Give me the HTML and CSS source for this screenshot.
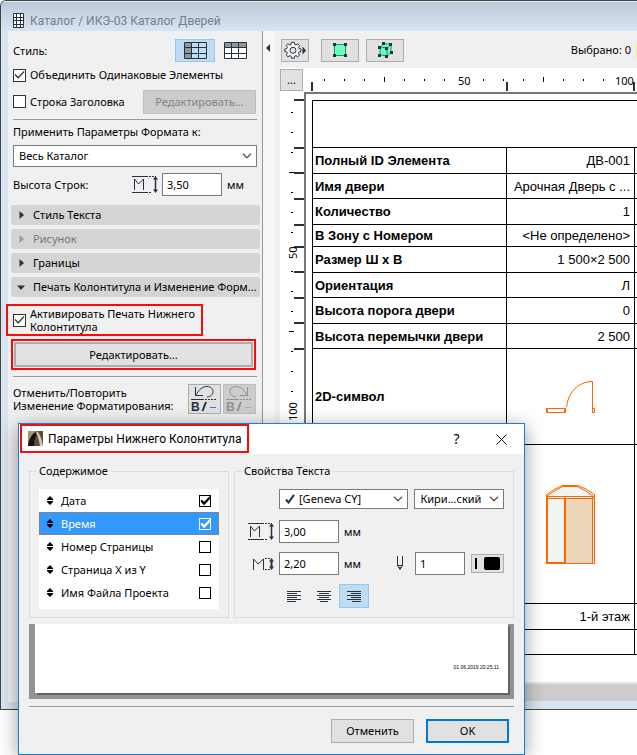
FILE: index.html
```html
<!DOCTYPE html>
<html lang="ru">
<head>
<meta charset="utf-8">
<title>Каталог / ИКЭ-03 Каталог Дверей</title>
<link rel="stylesheet" href="styles.css">
</head>
<body>
<svg class="defs" aria-hidden="true">
  <defs>
    <symbol id="chevron" viewBox="0 0 10 6"><path d="M1 .8 5 4.8 9 .8" fill="none" stroke="#555" stroke-width="1.3"/></symbol>
    <symbol id="arrow-right" viewBox="0 0 5 8"><path d="M.5 0 5 4 .5 8z" fill="currentColor"/></symbol>
    <symbol id="arrow-down" viewBox="0 0 8 5"><path d="M0 .5H8L4 5z" fill="currentColor"/></symbol>
    <symbol id="row-height" viewBox="0 0 27 19">
      <path d="M0 1.5H14M0 17.5H14" stroke="#26333c" fill="none"/>
      <path d="M14 1.5H24M14 17.5H20" stroke="#26333c" stroke-dasharray="2 1" fill="none"/>
      <path d="M2.500 15V4L6.500 9 11.500 4V15" stroke="#26333c" fill="none"/>
      <path d="M23.500 3V16" stroke="#26333c" stroke-width="1.500"/>
      <path d="M21 4.500 23.500 1 26 4.500zM21 14.500 23.500 18 26 14.500z" fill="#26333c"/>
    </symbol>
    <symbol id="text-height" viewBox="0 0 22 14">
      <path d="M.5 13V2L5 7 10.500 2V13" stroke="#26333c" fill="none"/>
      <path d="M12 1.500H18M12 12.500H18" stroke="#26333c" stroke-dasharray="2 1" fill="none"/>
      <path d="M18.500 3V11" stroke="#26333c" stroke-width="2"/>
      <path d="M16 4.500 18.500 1 21 4.500zM16 9.500 18.500 13 21 9.500z" fill="#26333c"/>
    </symbol>
    <symbol id="sorter" viewBox="0 0 6 9"><path d="M3 0 6 3V4H0V3zM0 5H6V6L3 9 0 6z" fill="#000"/></symbol>
  </defs>
</svg>

<div class="window">
  <header class="titlebar">
    <svg width="11" height="15" viewBox="0 0 11 15"><path d="M.5.5H10.500V14.500H.5zM3.500 0V15M7.500 0V15M0 4.500H11M0 7.500H11M0 11.500H11" fill="#fff" stroke="#26333c"/></svg>
    <h1>Каталог / ИКЭ-03 Каталог Дверей</h1>
  </header>

  <div class="workspace">
    <aside class="panel">
      <div class="row style-row">
        <span class="grow">Стиль:</span>
        <button class="style-button active" aria-label="Заголовки слева">
          <svg width="23" height="17" viewBox="0 0 23 17"><path d="M1 1H7V16H1z" fill="#8f9698"/><path d="M8 1H22V16H8z" fill="#bfe0f2"/><path d="M.5.5H22.500V16.500H.5zM7.500 0V17M14.500 0V17M0 5.500H23M0 11.500H23" fill="none" stroke="#26333c"/></svg>
        </button>
        <button class="style-button" aria-label="Заголовки сверху">
          <svg width="23" height="17" viewBox="0 0 23 17"><path d="M1 1H22V5H1z" fill="#8f9698"/><path d="M1 6H22V16H1z" fill="#fff"/><path d="M.5.5H22.500V16.500H.5zM7.500 0V17M14.500 0V17M0 5.500H23M0 11.500H23" fill="none" stroke="#26333c"/></svg>
        </button>
      </div>
      <label class="row check-row"><input type="checkbox" class="check" checked>Объединить Одинаковые Элементы</label>
      <div class="row header-row">
        <label class="check-label grow"><input type="checkbox" class="check">Строка Заголовка</label>
        <button class="button edit-header" disabled>Редактировать...</button>
      </div>
      <hr>
      <label class="apply-label" for="scope">Применить Параметры Формата к:</label>
      <div class="select scope">
        <select id="scope"><option>Весь Каталог</option></select>
        <svg width="10" height="6"><use href="#chevron"/></svg>
      </div>
      <div class="row height-row">
        <label class="grow" for="row-h">Высота Строк:</label>
        <svg width="27" height="19"><use href="#row-height"/></svg>
        <input id="row-h" class="field" value="3,50">
        <span class="unit">мм</span>
      </div>

      <div class="sections">
        <button class="section"><svg width="5" height="8"><use href="#arrow-right"/></svg><span>Стиль Текста</span></button>
        <button class="section" disabled><svg width="5" height="8"><use href="#arrow-right"/></svg><span>Рисунок</span></button>
        <button class="section"><svg width="5" height="8"><use href="#arrow-right"/></svg><span>Границы</span></button>
        <button class="section open"><svg width="8" height="5"><use href="#arrow-down"/></svg><span>Печать Колонтитула и Изменение Форм...</span></button>
      </div>

      <label class="footer-check marked"><input type="checkbox" class="check" checked><span>Активировать Печать Нижнего Колонтитула</span></label>
      <div class="footer-edit marked"><button class="button">Редактировать...</button></div>
      <hr>
      <div class="row undo-row">
        <span class="grow">Отменить/Повторить<br>Изменение Форматирования:</span>
        <button class="button square-button" aria-label="Отменить">
          <svg width="27" height="28" viewBox="0 0 27 28" fill="none" stroke="#26333c"><path d="M4.500 2V10.500H12M4.500 10.500C8 5 11 1.500 16 1.500 20 1.500 22 4 22 6.500 22 10 19.500 11.500 16 12"/><path d="M0 14.500H13"/><path d="M14 14.500H26" stroke-dasharray="2 1"/><text x="0" y="26" fill="#26333c" stroke="none">B</text><path d="M11.500 26 15 17" stroke-width="2"/><path d="M19 22.500H25" stroke="#2a7de1"/></svg>
        </button>
        <button class="button square-button" aria-label="Повторить" disabled>
          <svg width="27" height="28" viewBox="0 0 27 28" fill="none" stroke="#8d9295"><path d="M21.500 2V10.500H14M21.500 10.500C18 5 15 1.500 10 1.500 6 1.500 4 4 4 6.500 4 10 6.500 11.500 10 12"/><path d="M0 14.500H13"/><path d="M14 14.500H26" stroke-dasharray="2 1"/><text x="0" y="26" fill="#8d9295" stroke="none">B</text><path d="M11.500 26 15 17" stroke-width="2"/><path d="M19 22.500H25" stroke="#8db4e0"/></svg>
        </button>
      </div>
    </aside>

    <button class="splitter" aria-label="Свернуть панель"><svg width="4" height="8" viewBox="0 0 4 8"><path d="M4 0V8L0 4z" fill="#333"/></svg></button>

    <main class="view">
      <div class="toolbar">
        <button class="button gear" aria-label="Настройки">
          <svg width="22" height="18" viewBox="0 0 22 18"><path d="M7.300 1.300H10.300L10.700 3.400 12 4 13.700 2.800 15.600 4.700 14.500 6.400 15 7.600 17 8V10.500L15 11 14.400 12.300 15.600 14 13.700 15.800 12 14.600 10.700 15.200 10.300 17.200H7.500L7 15.200 5.800 14.600 4 15.800 2.200 14 3.400 12.300 2.800 11 .8 10.600V8L2.800 7.600 3.400 6.300 2.200 4.600 4 2.800 5.800 4 7 3.400z" fill="#f4f4f4" stroke="#26333c" stroke-linejoin="round"/><circle cx="9" cy="9.300" r="3" fill="#e1e1e1" stroke="#26333c"/><path d="M18.500 5.500 22 9.500 18.500 13.500z" fill="#26333c"/></svg>
        </button>
        <button class="button tool" aria-label="Выбрать на плане">
          <svg width="14" height="14" viewBox="0 0 14 14"><path d="M1.500 1.500H12.500V12.500H1.500z" fill="#66ffbf" stroke="#159a56"/><path d="M0 0H3V3H0zM11 0H14V3H11zM0 11H3V14H0zM11 11H14V14H11z" fill="#26333c"/></svg>
        </button>
        <button class="button tool" aria-label="Выбрать в 3D">
          <svg width="15" height="16" viewBox="0 0 15 16"><path d="M2 5 6 1.500 13 2.500V11L9 14 2 13z" fill="#66ffbf" stroke="#159a56"/><path d="M2 5 9 6 13 2.500M9 6V14" fill="none" stroke="#159a56"/><path d="M0 4H3V7H0zM0 12H3V15H0zM7 5H10V8H7zM7 13H10V16H7zM4 0H7V3H4zM11 1H14V4H11zM12 9H15V12H12z" fill="#26333c"/></svg>
        </button>
        <span class="selected-count">Выбрано: 0</span>
        <span class="status-chip"></span>
      </div>

      <div class="sheet-grid">
        <button class="button corner" aria-label="Параметры таблицы">...</button>
        <svg class="ruler-top" width="100%" height="24">
          <path d="M20.500 11V13M40.500 11V13M60.500 11V13M80.500 9V14M100.500 11V13M120.500 11V13M140.500 11V13M179.500 11V13M199.500 11V13M219.500 11V13M239.500 9V14M259.500 11V13M279.500 11V13M299.500 11V13" stroke="#000"/>
          <path d="M8 14V23M203 14V23M330 14V23" stroke="#26333c" stroke-width="2"/>
          <text x="154" y="17">50</text><text x="311" y="17">100</text>
        </svg>
        <svg class="ruler-left" width="24" height="100%">
          <path d="M11 20.500H13M11 40.500H13M11 60.500H13M9 80.500H14M11 100.500H13M11 120.500H13M11 140.500H13M11 179.500H13M11 199.500H13M11 219.500H13M9 239.500H14M11 259.500H13M11 279.500H13M11 299.500H13" stroke="#000"/>
          <path d="M14 8H24M14 56H24M14 81H24M14 107H24M14 133H24M14 155H24M14 180H24M14 206H24M14 231H24M14 257H24M14 353H24" stroke="#26333c" stroke-width="2"/>
          <text transform="translate(17 167) rotate(-90)">50</text><text transform="translate(17 329) rotate(-90)">100</text>
        </svg>
        <div class="sheet">
          <table>
            <colgroup><col class="name-col"><col class="value-col"><col></colgroup>
            <tr class="head"><td colspan="3"></td></tr>
            <tr><th scope="row">Полный ID Элемента</th><td>ДВ-001</td><td></td></tr>
            <tr><th scope="row">Имя двери</th><td>Арочная Дверь с ...</td><td></td></tr>
            <tr><th scope="row">Количество</th><td>1</td><td></td></tr>
            <tr class="tight"><th scope="row">В Зону с Номером</th><td>&lt;Не определено&gt;</td><td></td></tr>
            <tr><th scope="row">Размер Ш х В</th><td>1 500×2 500</td><td></td></tr>
            <tr><th scope="row">Ориентация</th><td>Л</td><td></td></tr>
            <tr><th scope="row">Высота порога двери</th><td>0</td><td></td></tr>
            <tr><th scope="row">Высота перемычки двери</th><td>2 500</td><td></td></tr>
            <tr class="symbol"><th scope="row">2D-символ</th><td class="drawing">
              <svg width="50" height="34" viewBox="0 0 50 34" fill="none" stroke="#f60"><path d="M.5 28.500H19.500V32.500H.5zM1.500 28V33M18.500 28V33M46.500 28.500H48.500V32.500H46.500z"/><path d="M46.500 33V1.500H43"/><path d="M20.500 27C22 13 31 2.500 45 1.500"/></svg>
            </td><td></td></tr>
            <tr class="front"><th scope="row"></th><td class="drawing">
              <svg width="50" height="81" viewBox="0 0 50 81"><path d="M1 12 10 5.500 17 2H33L42 6 49 12V80H1z" fill="#eff5f0"/><path d="M20 14H47V80H20z" fill="#edd6b8"/><g fill="none" stroke="#f60"><path d="M.5 80V10.500M1.500 80V12M1 12.500H48M1 14.500H48M18.500 14V80M19.500 14V80M46.500 12V80M48.500 10V80M0 79.500H49M0 78.500H20"/><path d="M.5 10.500 9 5 16 1.500H32L40 5 48.500 10.500M1 12 10 6 17 2.500H31L39 6.500 47 12"/></g></svg>
            </td><td></td></tr>
            <tr><th scope="row"></th><td>1-й этаж</td><td></td></tr>
            <tr><th scope="row"></th><td></td><td></td></tr>
          </table>
        </div>
      </div>
      <div class="scrollbar"></div>
    </main>
  </div>
</div>

<section class="dialog" role="dialog" aria-labelledby="dialog-title">
  <header class="dialog-bar">
    <div class="dialog-name marked">
      <svg width="15" height="15" viewBox="0 0 15 15"><rect width="15" height="15" fill="#5a5038"/><path d="M0 0H8L4 4 1 9 0 12z" fill="#a1967a"/><path d="M0 15C1 8 4 3 8 1L10 3C7 5 6 10 6 15z" fill="#17140c"/><path d="M9 0C12 3 14 9 15 15H12C11 9 10 5 8 2z" fill="#d2c8a8"/></svg>
      <h2 id="dialog-title">Параметры Нижнего Колонтитула</h2>
    </div>
    <button class="caption-button" aria-label="Справка">?</button>
    <button class="caption-button" aria-label="Закрыть"><svg width="11" height="11" viewBox="0 0 11 11"><path d="M.5.5 10.500 10.500M10.500.5.5 10.500" stroke="#111" fill="none"/></svg></button>
  </header>
  <div class="dialog-body">
    <div class="groups">
      <fieldset class="content-group">
        <legend>Содержимое</legend>
        <div class="list">
          <label class="item"><svg width="6" height="9"><use href="#sorter"/></svg><span>Дата</span><input type="checkbox" class="check bold" checked></label>
          <label class="item current"><svg width="6" height="9"><use href="#sorter"/></svg><span>Время</span><input type="checkbox" class="check bold" checked></label>
          <label class="item"><svg width="6" height="9"><use href="#sorter"/></svg><span>Номер Страницы</span><input type="checkbox" class="check bold"></label>
          <label class="item"><svg width="6" height="9"><use href="#sorter"/></svg><span>Страница X из Y</span><input type="checkbox" class="check bold"></label>
          <label class="item"><svg width="6" height="9"><use href="#sorter"/></svg><span>Имя Файла Проекта</span><input type="checkbox" class="check bold"></label>
        </div>
      </fieldset>
      <fieldset class="text-group">
        <legend>Свойства Текста</legend>
        <div class="text-row fonts">
          <div class="select font-select">
            <svg width="10" height="10" viewBox="0 0 10 10"><path d="M1 5.500 3.500 8.500 9 .8" fill="none" stroke="#26333c" stroke-width="2"/></svg>
            <select aria-label="Шрифт"><option>[Geneva CY]</option></select>
            <svg width="10" height="6"><use href="#chevron"/></svg>
          </div>
          <div class="select script-select">
            <select aria-label="Кодировка"><option>Кири...ский</option></select>
            <svg width="10" height="6"><use href="#chevron"/></svg>
          </div>
        </div>
        <div class="text-row">
          <span class="lead"><svg width="27" height="19"><use href="#row-height"/></svg></span>
          <input class="field" value="3,00" aria-label="Высота строки">
          <span class="unit">мм</span>
        </div>
        <div class="text-row">
          <span class="lead"><svg width="22" height="14"><use href="#text-height"/></svg></span>
          <input class="field" value="2,20" aria-label="Высота текста">
          <span class="unit grow">мм</span>
          <svg class="pen" width="8" height="15" viewBox="0 0 8 15"><path d="M1.500 0V9.500L4 13.500 6.500 9.500V0M1.500 9.500H6.500" fill="none" stroke="#26333c"/><path d="M3 11H5L4 14z" fill="#26333c"/></svg>
          <input class="field pen-field" value="1" aria-label="Перо">
          <button class="button swatch" aria-label="Цвет пера"><svg width="27" height="13" viewBox="0 0 27 13"><path d="M1 1H3V12H1z"/><rect x="10" width="16" height="13" rx="2"/></svg></button>
        </div>
        <div class="text-row aligns">
          <button class="align" aria-label="По левому краю"><svg width="14" height="11" viewBox="0 0 14 11"><path d="M0 .5H14M0 2.500H10M0 4.500H14M0 6.500H10M0 8.500H14M0 10.500H9" stroke="#26333c"/></svg></button>
          <button class="align" aria-label="По центру"><svg width="14" height="11" viewBox="0 0 14 11"><path d="M0 .5H14M2 2.500H12M0 4.500H14M2 6.500H12M0 8.500H14M3 10.500H11" stroke="#26333c"/></svg></button>
          <button class="align active" aria-label="По правому краю"><svg width="14" height="11" viewBox="0 0 14 11"><path d="M0 .5H14M4 2.500H14M0 4.500H14M4 6.500H14M0 8.500H14M5 10.500H14" stroke="#26333c"/></svg></button>
        </div>
      </fieldset>
    </div>
    <div class="preview"><div class="paper">01.06.2019 20:25:11</div></div>
    <hr>
    <div class="actions">
      <button class="button">Отменить</button>
      <button class="button primary">OK</button>
    </div>
  </div>
</section>
</body>
</html>
```
FILE: styles.css
```css
* { box-sizing: border-box; }

body {
  margin: 0;
  background: #fff;
  color: #000;
  font: 11px/14px "Noto Sans", "Open Sans", sans-serif;
  overflow: hidden;
}

button, input, select { font: inherit; color: inherit; margin: 0; }
svg { display: block; flex: none; }
h1, h2 { margin: 0; font: 12px/16px Roboto, "Noto Sans", sans-serif; white-space: nowrap; }
hr { margin: 0; border: 0; border-top: 1px solid #999; }
.defs { position: absolute; width: 0; height: 0; }
.grow { flex: 1; }
.marked { border: 2px solid #fa0a0a; }

/* Catalogue window */
.window {
  border: 1px solid #444;
  border-right: 0;
  border-radius: 6px 0 0 0;
  background: #d7e4f2;
  overflow: hidden;
}
.titlebar {
  display: flex;
  align-items: center;
  gap: 6px;
  height: 30px;
  padding: 8px 12px 0;
  border-top: 1px solid #e4ebf3;
  background: linear-gradient(#bccad9, #d7e4f2);
  color: #76808c;
}
.workspace {
  display: grid;
  grid-template-columns: 254px 12px minmax(0, 1fr);
  margin: 0 0 7px 7px;
  background: #f0f0f0;
}

/* Settings panel */
.panel { padding: 8px 5px 0; }
.row { display: flex; align-items: center; }
.style-row { height: 23px; padding-right: 2px; }
.style-button {
  display: grid;
  place-items: center;
  width: 40px;
  height: 23px;
  padding: 0;
  border: 1px solid transparent;
  background: none;
}
.active { border-color: #90c8f6; background: #c0dcf3; }
.check-row { height: 26px; gap: 4px; white-space: nowrap; }
.check-label { display: flex; align-items: center; gap: 4px; white-space: nowrap; }
.header-row { height: 31px; padding: 0 1px 4px 0; }

.check {
  appearance: none;
  flex: none;
  display: grid;
  place-items: center;
  width: 13px;
  height: 13px;
  border: 1px solid #333;
  background: #fff;
}
.check:checked::before {
  content: "";
  width: 11px;
  height: 11px;
  background: #333;
  clip-path: polygon(5% 50%, 14% 42%, 38% 66%, 88% 14%, 96% 23%, 38% 84%);
}
.check.bold:checked::before {
  clip-path: polygon(8% 40%, 20% 40%, 38% 56%, 84% 8%, 94% 8%, 94% 28%, 38% 88%, 8% 60%);
}

.button {
  display: grid;
  place-items: center;
  padding: 0;
  border: 1px solid #adadad;
  background: #e1e1e1;
}
.button:disabled { border-color: #bfbfbf; background: #ccc; color: #838383; }
.edit-header { width: 113px; height: 24px; }

.apply-label { display: block; padding: 5px 0 6px; }
.select {
  display: flex;
  align-items: center;
  gap: 4px;
  height: 22px;
  padding: 0 4px 0 5px;
  border: 1px solid #7a7a7a;
  background: #fff;
}
.select select {
  appearance: none;
  flex: 1;
  min-width: 0;
  height: 18px;
  padding: 0;
  border: 0;
  background: none;
  outline: 0;
}
.height-row { height: 35px; }
.height-row .field { margin-left: 3px; }
.height-row .unit { width: 30px; margin-right: 0; }
.field {
  width: 60px;
  height: 23px;
  padding: 0 4px;
  border: 1px solid #7a7a7a;
  background: #fff;
}
.unit { margin-left: 5px; }

.sections { display: grid; gap: 4px; margin: 3px -3px 7px -2px; }
.section {
  display: flex;
  align-items: center;
  gap: 9px;
  height: 20px;
  min-width: 0;
  padding: 0 3px 0 8px;
  border: 0;
  border-radius: 3px;
  background: #d4d4d4;
  text-align: left;
  line-height: 18px;
  white-space: nowrap;
}
.section svg { color: #333; }
.section:disabled { color: #777; }
.section:disabled svg { color: #999; }
.section.open { gap: 8px; padding-left: 6px; }

.footer-check {
  display: flex;
  align-items: center;
  gap: 4px;
  width: 197px;
  margin-left: -7px;
  padding: 0 5px;
  height: 32px;
  line-height: 13px;
}
.footer-edit { margin: 3px 1px 6px -2px; padding: 1px; }
.footer-edit .button { width: 100%; height: 25px; border-width: 2px; }
.undo-row { padding: 7px 1px 0 0; gap: 2px; line-height: 13px; white-space: nowrap; }
.square-button { width: 33px; height: 30px; }
.square-button text { font: bold 12px "Liberation Sans", Arial, sans-serif; }

.splitter {
  padding: 13px 0 0 3px;
  border: 0;
  border-left: 1px solid #999;
  background: #f7f7f7;
  display: flex;
  align-items: flex-start;
}

/* Catalogue view */
.view { display: flex; flex-direction: column; min-width: 0; }
.toolbar { display: flex; align-items: center; height: 37px; padding: 1px 0 0 7px; }
.toolbar .button { height: 23px; }
.gear { width: 28px; margin-right: 12px; }
.tool { width: 38px; margin-right: 7px; }
.selected-count { margin-left: auto; }
.status-chip { width: 1px; height: 14px; margin-left: 5px; background: #f7f08a; }

.sheet-grid {
  display: grid;
  grid-template: 24px 1fr / 24px minmax(0, 1fr);
  margin-left: 6px;
  background: #fff;
}
.corner { width: 23px; height: 22px; margin-top: 1px; }
.ruler-top, .ruler-left { font-size: 11px; }
.sheet {
  padding: 6px 0 27px 6px;
  border: solid #777;
  border-width: 2px 0 0 2px;
  overflow: hidden;
}
.scrollbar { height: 20px; border: solid #e4e4e4; border-width: 2px 0 1px; background: #ccc; }

table {
  width: 720px;
  table-layout: fixed;
  border-collapse: collapse;
  font: 13px/15px "Liberation Sans", Arial, sans-serif;
}
.name-col { width: 194px; }
.value-col { width: 128px; }
th, td { height: 25px; padding: 0 4px 0 2px; border: 1px solid #000; }
th { text-align: left; }
td { text-align: right; }
tr:nth-child(even) > * { height: 26px; }
.tight > * { height: 22px; }
.head > * { height: 47px; }
tr.symbol > * { height: 96px; }
.front > * { height: 159px; }
.drawing { padding: 0 2px; }
.drawing svg { margin: 0 auto; }

/* Footer options dialog, floating above the window */
.dialog {
  position: absolute;
  left: 18px;
  top: 423px;
  width: 507px;
  border: 1px solid #1a7fd4;
  background: #f0f0f0;
  box-shadow: 0 4px 18px rgba(0, 0, 0, .4);
}
.dialog-bar { display: flex; height: 30px; background: #fff; }
.dialog-name {
  display: flex;
  align-items: center;
  gap: 5px;
  height: 29px;
  margin: 0 auto 0 1px;
  padding: 0 5px 0 6px;
}
.caption-button {
  display: grid;
  place-items: center;
  width: 45px;
  padding: 0;
  border: 0;
  background: none;
  font-size: 14px;
}
.dialog-body { padding: 10px 10px 11px; }
.groups { display: grid; grid-template-columns: 200px 1fr; gap: 5px; }
fieldset { min-width: 0; margin: 0; padding: 0 9px; border: 1px solid #dcdcdc; }
legend { padding: 0 2px; margin-left: -2px; }
.content-group { padding-bottom: 8px; }
.list { height: 120px; margin-top: 11px; background: #fff; }
.item {
  display: flex;
  align-items: center;
  height: 23px;
  padding: 0 8px;
}
.item span { flex: 1; margin-left: 8px; }
.item .check { border-color: #000; width: 12px; height: 12px; }
.item .check::before { background: #000; }
.current { background: #3399ff; color: #fff; outline: 1px dotted #c87020; outline-offset: -1px; }
.item.current .check { border-color: #fff; background: #3399ff; }
.item.current .check::before { background: #fff; }

.text-row { display: flex; align-items: center; margin-bottom: 9px; }
.fonts { margin: 11px 0 11px 35px; gap: 6px; }
.fonts .select { height: 20px; }
.font-select { width: 130px; }
.script-select { width: 90px; }
.lead { display: flex; justify-content: flex-end; width: 35px; padding-right: 4px; }
.pen { margin-right: 11px; }
.pen-field { width: 50px; margin-right: 6px; }
.swatch { width: 33px; height: 19px; }
.aligns { margin: 0 0 0 35px; }
.align {
  display: grid;
  place-items: center;
  width: 30px;
  height: 24px;
  padding: 0;
  border: 1px solid transparent;
  background: none;
}
.align.active { border-color: #90c8f6; background: #c0dcf3; }

.preview { margin: 6px 0 7px; padding: 0 6px 6px; background: #929292; }
.paper {
  display: flex;
  align-items: flex-end;
  justify-content: flex-end;
  height: 69px;
  padding: 0 9px 22px;
  background: #fff;
  box-shadow: 2px 2px #646464;
  font: 5px/8px "Liberation Sans", Arial, sans-serif;
}
.actions { display: flex; justify-content: flex-end; gap: 12px; padding: 12px 5px 0; }
.actions .button { width: 83px; height: 24px; }
.actions .primary { border: 2px solid #0078d7; }
```
